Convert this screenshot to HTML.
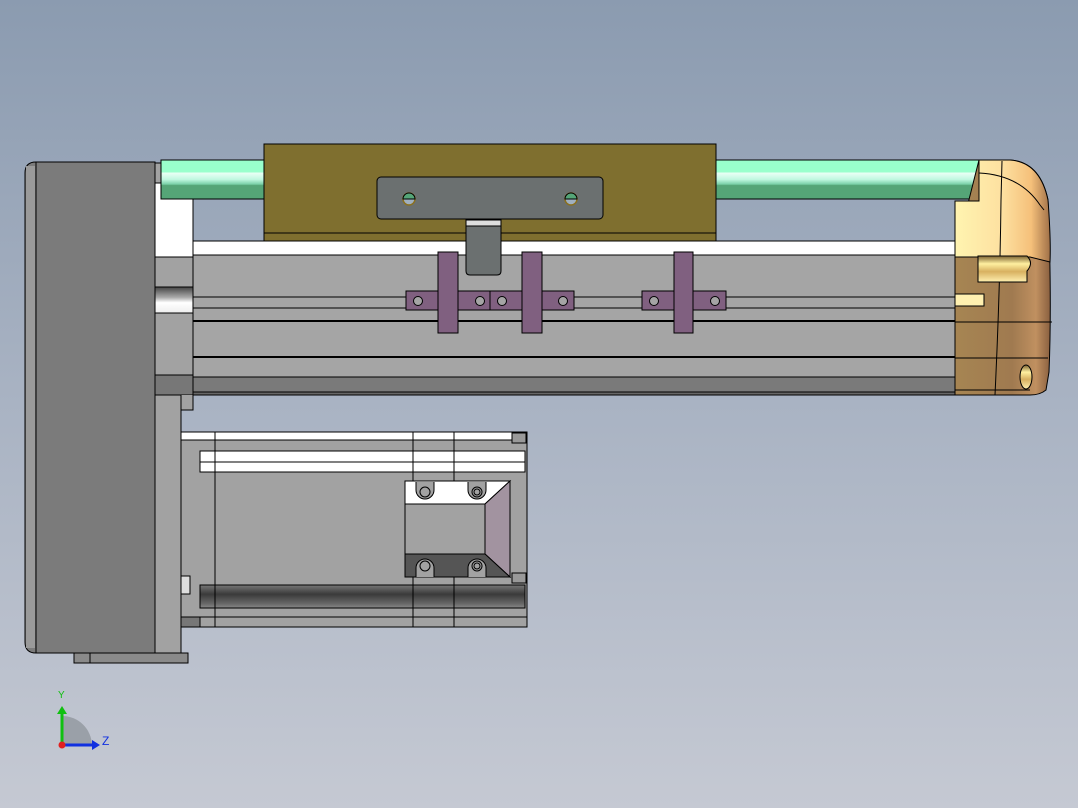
<!DOCTYPE html>
<html><head><meta charset="utf-8"><style>
html,body{margin:0;padding:0;width:1078px;height:808px;overflow:hidden}
body{background:linear-gradient(#8b9bb0,#a9b3c3 50%,#c5c9d3)}
svg{position:absolute;left:0;top:0}
text{font-family:"Liberation Sans",sans-serif}
</style></head><body>
<svg width="1078" height="808" viewBox="0 0 1078 808" stroke="#000" stroke-width="1">
<defs>
<linearGradient id="rod" x1="0" y1="0" x2="0" y2="1">
<stop offset="0" stop-color="#99ffcc"/><stop offset="0.3" stop-color="#99ffcc"/>
<stop offset="0.34" stop-color="#e8fff4"/><stop offset="0.5" stop-color="#c0f8e0"/><stop offset="0.62" stop-color="#7ad0a8"/>
<stop offset="0.65" stop-color="#55a577"/><stop offset="1" stop-color="#55a577"/></linearGradient>
<linearGradient id="cyl" x1="0" y1="0" x2="0" y2="1">
<stop offset="0" stop-color="#444"/><stop offset="0.4" stop-color="#aaa"/><stop offset="0.6" stop-color="#fff"/><stop offset="1" stop-color="#eee"/></linearGradient>
<linearGradient id="dk" x1="0" y1="0" x2="0" y2="1">
<stop offset="0" stop-color="#777"/><stop offset="0.4" stop-color="#3a3a3a"/><stop offset="0.8" stop-color="#666"/><stop offset="1" stop-color="#888"/></linearGradient>
<linearGradient id="capT" x1="0" y1="0" x2="1" y2="0">
<stop offset="0" stop-color="#fff4b0"/><stop offset="0.5" stop-color="#fde0a0"/><stop offset="0.8" stop-color="#f5c07a"/><stop offset="1" stop-color="#a07048"/></linearGradient>
<linearGradient id="capB" x1="0" y1="0" x2="1" y2="0">
<stop offset="0" stop-color="#a68552"/><stop offset="0.6" stop-color="#a07a50"/><stop offset="0.85" stop-color="#c09060"/><stop offset="1" stop-color="#8a6040"/></linearGradient>
<linearGradient id="pin" x1="0" y1="0" x2="0" y2="1">
<stop offset="0" stop-color="#7a6030"/><stop offset="0.3" stop-color="#fff0a0"/><stop offset="0.6" stop-color="#d8b060"/><stop offset="1" stop-color="#fff0b0"/></linearGradient>
</defs>

<!-- left big box -->
<path d="M36 162 H155 V653 H36 Q25 653 25 642 V173 Q25 162 36 162Z" fill="#7b7b7b"/>
<path d="M36 162 V653" fill="none"/>
<rect x="26" y="166" width="9" height="482" fill="#9a9a9a" stroke="none"/>
<rect x="74" y="653" width="114" height="10" fill="#8a8a8a"/>
<line x1="90" y1="653" x2="90" y2="663"/>
<!-- flange -->
<rect x="155" y="163" width="38" height="232" fill="#a2a2a2"/>
<rect x="155" y="183" width="38" height="74" fill="#fff"/>
<rect x="155" y="287" width="38" height="26" fill="url(#cyl)"/>
<rect x="155" y="375" width="38" height="20" fill="#777"/>
<rect x="155" y="395" width="26" height="258" fill="#a2a2a2"/>
<path d="M181 395 V410 H193 V395" fill="#a2a2a2"/>

<!-- rods -->
<rect x="161" y="160" width="104" height="39" fill="url(#rod)"/>
<rect x="716" y="160" width="263" height="39" fill="url(#rod)"/>

<!-- white strip & body -->
<rect x="193" y="241" width="762" height="14" fill="#fff"/>
<rect x="193" y="255" width="762" height="140" fill="#a5a5a5"/>
<line x1="193" y1="297" x2="955" y2="297"/>
<line x1="193" y1="308" x2="955" y2="308"/>
<line x1="193" y1="321" x2="955" y2="321" stroke-width="2"/>
<line x1="193" y1="357" x2="955" y2="357" stroke-width="2"/>
<rect x="193" y="377" width="762" height="15" fill="#7a7a7a"/>
<rect x="193" y="392" width="762" height="3" fill="#666"/>

<!-- carriage -->
<rect x="264" y="144" width="452" height="97" fill="#7f6f2f"/>
<line x1="264" y1="233" x2="716" y2="233"/>
<rect x="377" y="177" width="226" height="42" rx="4" fill="#6b7070"/>
<circle cx="409" cy="199" r="6" fill="#a0b0c0" stroke="#8a7020" stroke-width="1.5"/>
<path d="M403 199 A6 6 0 0 1 415 199Z" fill="#55a577"/>
<circle cx="571" cy="199" r="6" fill="#a0b0c0" stroke="#8a7020" stroke-width="1.5"/>
<path d="M565 199 A6 6 0 0 1 577 199Z" fill="#55a577"/>
<path d="M466 219 H501 V271 Q501 275 497 275 H470 Q466 275 466 271Z" fill="#6b7070"/>
<rect x="466" y="220" width="35" height="6" fill="#ddd"/>

<!-- purple -->
<g fill="#806080">
<rect x="406" y="291" width="116" height="19"/>
<rect x="542" y="291" width="32" height="19"/>
<rect x="642" y="291" width="84" height="19"/>
<rect x="438" y="252" width="20" height="81"/>
<rect x="522" y="252" width="20" height="81"/>
<rect x="674" y="252" width="19" height="81"/>
</g>
<line x1="490" y1="291" x2="490" y2="310"/>
<g fill="#a5a5a5"><circle cx="418" cy="301" r="4.5"/><circle cx="480" cy="301" r="4.5"/><circle cx="502" cy="301" r="4.5"/><circle cx="563" cy="301" r="4.5"/><circle cx="654" cy="301" r="4.5"/><circle cx="715" cy="301" r="4.5"/></g>

<!-- end cap -->
<path d="M979 160 H1010 Q1040 162 1048 200 Q1052 300 1049 372 L1046 390 Q1040 395 1030 395 H955 V255 Z" fill="url(#capB)"/>
<path d="M979 160 H1010 Q1040 162 1048 200 Q1051 240 1050 262 L1030 257 H955 V201 H979 Z" fill="url(#capT)"/>
<path d="M1002 161 L1001 200 Q1000 290 995 395 M979 173 Q1020 175 1040 205 M1040 205 L1044 210" fill="none"/>
<line x1="955" y1="322" x2="1052" y2="322"/>
<line x1="955" y1="358" x2="1048" y2="358"/>
<line x1="955" y1="390" x2="1030" y2="390"/>
<path d="M978 256 H1027 Q1034 263 1027 271 V282 H978Z" fill="url(#pin)"/>
<rect x="955" y="294" width="29" height="12" fill="#fff0b0"/>
<ellipse cx="1026" cy="377" rx="6" ry="12" fill="url(#pin)"/>

<!-- motor -->
<rect x="181" y="432" width="346" height="195" fill="#a2a2a2"/>
<rect x="181" y="432" width="338" height="8" fill="#fff"/>
<rect x="200" y="451" width="325" height="21" fill="#fff"/>
<line x1="200" y1="462" x2="525" y2="462"/>
<rect x="200" y="585" width="325" height="23" fill="url(#dk)"/>
<line x1="200" y1="617" x2="527" y2="617"/>
<rect x="181" y="617" width="19" height="10" fill="#777"/>
<line x1="215" y1="432" x2="215" y2="627"/>
<line x1="413" y1="432" x2="413" y2="627"/>
<line x1="454" y1="432" x2="454" y2="627"/>
<rect x="512" y="433" width="14" height="10" fill="#999"/>
<rect x="512" y="573" width="14" height="10" fill="#999"/>
<rect x="181" y="576" width="9" height="18" fill="#ddd"/>
<!-- block -->
<rect x="405" y="481" width="105" height="96" fill="#a2a2a2"/>
<path d="M405 481 H510 L485 504 H405Z" fill="#fff"/>
<path d="M485 504 L510 481 V577 L485 554Z" fill="#a293a0"/>
<path d="M405 554 H485 L510 577 H405Z" fill="#555"/>
<g fill="#a2a2a2"><path d="M416 482 V490 A9 9 0 0 0 434 490 V482"/><path d="M468 482 V490 A9 9 0 0 0 486 490 V482"/>
<path d="M416 577 V568 A9 9 0 0 1 434 568 V577"/><path d="M468 577 V568 A9 9 0 0 1 486 568 V577"/></g>
<g fill="none"><circle cx="425" cy="492" r="5"/><circle cx="477" cy="492" r="5"/><circle cx="477" cy="492" r="3"/>
<circle cx="425" cy="566" r="5"/><circle cx="477" cy="566" r="5"/><circle cx="477" cy="566" r="3"/></g>

<!-- axes -->
<path d="M62 745 V716 A30 30 0 0 1 92 745Z" fill="#9aa0a8" stroke="none"/>
<line x1="62" y1="745" x2="62" y2="712" stroke="#10c010" stroke-width="3"/>
<path d="M57 714 L62 706 L67 714Z" fill="#10c010" stroke="none"/>
<line x1="62" y1="745" x2="94" y2="745" stroke="#1030e0" stroke-width="3"/>
<path d="M92 740 L100 745 L92 750Z" fill="#1030e0" stroke="none"/>
<circle cx="62" cy="745" r="3.5" fill="#e02020" stroke="none"/>
<text x="58" y="698" font-size="10" fill="#10c010" stroke="none">Y</text>
<text x="102" y="745" font-size="12" fill="#1030e0" stroke="none">Z</text>
</svg>
</body></html>
